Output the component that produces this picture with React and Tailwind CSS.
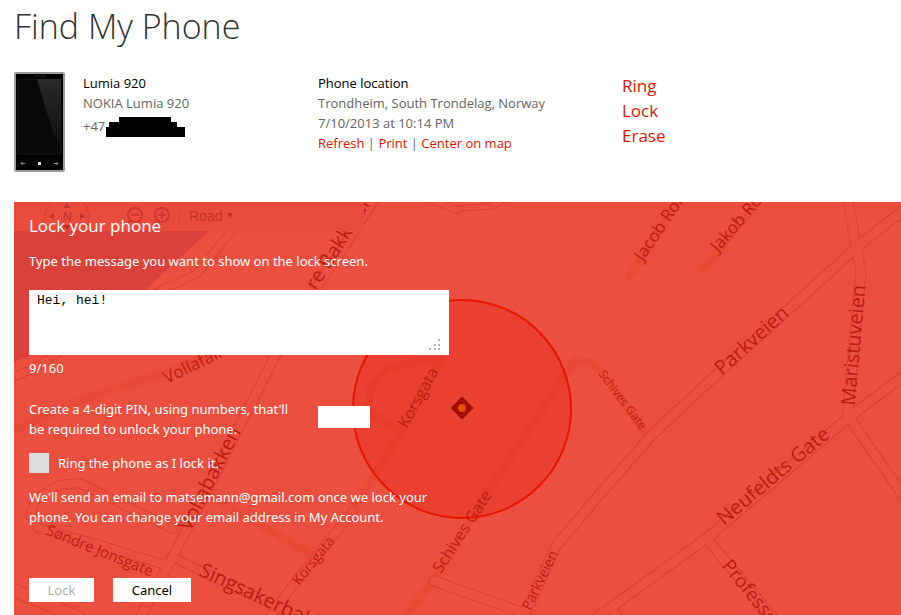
import React, { useState } from "react";

const MAX_LENGTH = 160;

const streets = [
  { d: "M10 379 L30 370 L160 291 L198 273 L231 231 L250 206", w: 9 },
  { d: "M380 190 L345 245 L308 300 L274 358 L252 402 L170 562 L138 622", w: 11 },
  { d: "M168 566 L100 545 L38 528 L30 515 L36 499 L60 485 L79 483 L173 529", w: 10 },
  { d: "M175 558 L205 573 L310 622", w: 10 },
  { d: "M8 588 L80 618", w: 14 },
  { d: "M353 511 L295 583 L264 624", w: 10 },
  { d: "M434 581 L524 613", w: 11 },
  { d: "M906 208 L857 247 L689 400 L651 436 L600 494 L556 546 L520 625", w: 11 },
  { d: "M847 196 L856 245 L861 272 L847 417", w: 11 },
  { d: "M906 374 L848 418 L707 538 L595 619", w: 11 },
  { d: "M707 539 L780 626", w: 11 },
  { d: "M850 419 L898 488 L910 505", w: 11 },
  { d: "M611 607 L622 622", w: 9 },
];

const lanes = [
  "M8 434 L70 404 L167 372 L235 345",
  "M441 360 L423 360 L387 369 L371 387 L368 412 L402 430",
  "M441 360 L402 430 L355 508",
  "M645 432 L600 370 L591 362 L575 360 L547 402 L487 493 L434 580 L400 622",
  "M630 276 L684 192",
  "M703 270 L765 192",
  "M212 497 L300 548 L316 557",
];

const labels = [
  { text: "re Bakkelandet", x: 316, y: 291, angle: -58, size: 20 },
  { text: "Jacob Rolls", x: 643, y: 262, angle: -56, size: 17 },
  { text: "Jakob Rolls", x: 718, y: 253, angle: -49, size: 17 },
  { text: "Parkveien", x: 722, y: 376, angle: -42, size: 20 },
  { text: "Maristuveien", x: 855, y: 406, angle: -85, size: 20 },
  { text: "Neufeldts Gate", x: 724, y: 526, angle: -40, size: 20 },
  { text: "Professor", x: 721, y: 566, angle: 51, size: 19 },
  { text: "Schives Gate", x: 598, y: 374, angle: 53, size: 12 },
  { text: "Schives Gate", x: 441, y: 574, angle: -57, size: 16 },
  { text: "Korsgata", x: 407, y: 429, angle: -61, size: 16 },
  { text: "Korsgata", x: 299, y: 586, angle: -51, size: 14 },
  { text: "Parkveien", x: 530, y: 611, angle: -64, size: 14 },
  { text: "Vollabakken", x: 190, y: 532, angle: -63, size: 20 },
  { text: "Vollafallet", x: 167, y: 384, angle: -26, size: 17 },
  { text: "Søndre Jonsgate", x: 45, y: 534, angle: 22, size: 15 },
  { text: "Singsakerbakken", x: 198, y: 575, angle: 25, size: 20 },
];

const PhoneMap = () => (
  <svg
    className="absolute inset-0 w-full h-full"
    viewBox="14 202 887 413"
    preserveAspectRatio="xMinYMin slice"
    aria-hidden="true"
  >
    <rect x="14" y="202" width="887" height="413" fill="#eb4f3f" />
    <path d="M14 202 H242 L209 231 L145 290 L85 338 L30 356 L14 362 Z" fill="#da413b" />

    <g fill="none" strokeLinecap="round" strokeLinejoin="round">
      {lanes.map((d) => (
        <path key={d} d={d} stroke="#e94937" strokeWidth="8" />
      ))}
      {streets.map(({ d, w }) => (
        <path key={d} d={d} stroke="#dc4034" strokeWidth={w} />
      ))}
      {streets.map(({ d, w }) => (
        <path key={d} d={d} stroke="#eb4f3f" strokeWidth={w - 2} />
      ))}
      <path
        d="M428 202 L452 212 Q458 215 461 211 L495 209 L505 202 M445 202 L460 206 Q463 208 461 211 M461 206 L493 203"
        stroke="#dc4034"
      />
    </g>

    {/* accuracy circle */}
    <circle cx="462" cy="409" r="109" fill="#e91f12" fillOpacity="0.3" stroke="#e81500" strokeWidth="2" />

    <g fill="#bd1c12" fontFamily="'Open Sans', 'Noto Sans', sans-serif">
      {labels.map(({ text, x, y, angle, size }) => (
        <text key={`${text}-${x}`} fontSize={size} transform={`translate(${x} ${y}) rotate(${angle})`}>
          {text}
        </text>
      ))}
    </g>

    {/* phone marker */}
    <path d="M462 396 L474 408 L462 420 L450 408 Z" fill="#a50d04" stroke="#d9453a" strokeWidth="1" />
    <circle cx="462" cy="408" r="4" fill="#e84a00" />

    {/* map toolbar */}
    <rect x="14" y="202" width="350" height="29" fill="#e94c3c" />
    <g fill="none" stroke="#cc382e">
      <circle cx="67" cy="217" r="22" strokeWidth="1" stroke="#d53f34" />
      <circle cx="135" cy="215" r="7" strokeWidth="2" />
      <path d="M131 215 H139 M130 221 L126 225" strokeWidth="2" />
      <circle cx="162" cy="215" r="7" strokeWidth="2" />
      <path d="M158 215 H166 M162 211 V219 M157 221 L153 225" strokeWidth="2" />
      <path d="M179 210 V223" stroke="#d9433a" />
    </g>
    <g fill="#c4322a" fontFamily="'Liberation Sans', Arial, sans-serif">
      <path d="M63 208 H71 L67 203 Z M63 225 H71 L67 230 Z M54 213 V220 L49 216 Z M80 213 V220 L85 216 Z" />
      <text x="63" y="221" fontSize="12">N</text>
      <text x="189" y="221" fontSize="14">Road</text>
      <path d="M227 213 H233 L230 218 Z" />
    </g>
  </svg>
);

const PhonePicture = () => (
  <svg className="shrink-0" width="51" height="100" viewBox="0 0 51 100" role="img" aria-label="Lumia 920">
    <defs>
      <linearGradient id="glare" x1="0" y1="0" x2="0" y2="1">
        <stop offset="0" stopColor="#2a2a2a" />
        <stop offset="1" stopColor="#0c0d0d" />
      </linearGradient>
    </defs>
    <rect x="1" y="1" width="49" height="98" rx="1" fill="#000" stroke="#9a9a9a" strokeWidth="2" />
    <path d="M19 4 H32" stroke="#222" />
    <rect x="4" y="7" width="43" height="75" fill="#070909" stroke="#151515" />
    <path d="M23 7 H47 V76 Q41 68 37 54 Z" fill="url(#glare)" />
    <path d="M7 91.500 H11 M8.500 90 L7 91.500 L8.500 93" fill="none" stroke="#888" />
    <path d="M40 91.500 H44 M42.500 90 L44 91.500 L42.500 93" fill="none" stroke="#888" />
    <rect x="24" y="90" width="3" height="3" fill="#ddd" />
  </svg>
);

const ActionLink = ({ children }) => (
  <a href="#" className="text-[#e51400] hover:underline">
    {children}
  </a>
);

const PhoneSummary = () => (
  <div className="grid grid-cols-[304px_304px_1fr] mt-6">
    <div className="flex gap-[18px]">
      <PhonePicture />
      <div className="pt-px">
        <h2 className="text-black">Lumia 920</h2>
        <p>NOKIA Lumia 920</p>
        <div className="flex gap-px pt-1">
          <span className="leading-[18px]">+47</span>
          <svg width="79" height="20" viewBox="0 0 79 20" aria-hidden="true">
            <path d="M13 0 H65 V5 H71 V10 H79 V20 H0 V10 H3 V5 H13 Z" />
          </svg>
        </div>
      </div>
    </div>
    <div className="pt-px">
      <h2 className="text-black">Phone location</h2>
      <p>Trondheim, South Trondelag, Norway</p>
      <p>7/10/2013 at 10:14 PM</p>
      <p>
        <ActionLink>Refresh</ActionLink> | <ActionLink>Print</ActionLink> |{" "}
        <ActionLink>Center on map</ActionLink>
      </p>
    </div>
    <ul className="pt-px text-[17px] leading-[25px]">
      <li><ActionLink>Ring</ActionLink></li>
      <li><ActionLink>Lock</ActionLink></li>
      <li><ActionLink>Erase</ActionLink></li>
    </ul>
  </div>
);

const LockForm = () => {
  const [message, setMessage] = useState("Hei, hei!");
  const [pin, setPin] = useState("");
  const [ring, setRing] = useState(false);

  return (
    <form
      className="relative px-[15px] pt-3 pb-[13px] text-white font-['Noto_Sans','Open_Sans',sans-serif]"
      onSubmit={(e) => e.preventDefault()}
    >
      <h2 className="font-['Open_Sans','Noto_Sans',sans-serif] text-[17px] leading-6">Lock your phone</h2>
      <label htmlFor="message" className="block mt-[13px]">
        Type the message you want to show on the lock screen.
      </label>
      <div className="relative mt-[19px] w-[420px] max-w-full">
        <textarea
          id="message"
          maxLength={MAX_LENGTH}
          value={message}
          onChange={(e) => setMessage(e.target.value)}
          className="block w-full h-[65px] resize-none bg-white px-2 py-[3px] font-['Liberation_Mono',monospace] text-[13px] leading-4 text-black outline-none"
        />
        <svg className="absolute right-2 bottom-1 pointer-events-none" width="12" height="12" aria-hidden="true">
          <path
            d="M9 0h2v2h-2z M5 5h2v2h-2z M9 5h2v2h-2z M0 9h2v2h-2z M5 9h2v2h-2z M9 9h2v2h-2z"
            fill="#b5b5b5"
          />
        </svg>
      </div>
      <p className="mt-[3px]">
        {message.length}/{MAX_LENGTH}
      </p>

      <div className="flex items-start mt-[21px]">
        <label htmlFor="pin" className="w-[289px] pr-5">
          Create a 4-digit PIN, using numbers, that'll be required to unlock your phone.
        </label>
        <input
          id="pin"
          type="text"
          inputMode="numeric"
          maxLength={4}
          value={pin}
          onChange={(e) => setPin(e.target.value)}
          className="mt-[7px] h-[22px] w-[52px] bg-white px-1 text-black outline-none"
        />
      </div>

      <div className="flex items-center gap-[9px] mt-[14px]">
        <input
          id="ring"
          type="checkbox"
          checked={ring}
          onChange={(e) => setRing(e.target.checked)}
          className="size-5 appearance-none bg-[#ddd] checked:bg-[#555]"
        />
        <label htmlFor="ring">Ring the phone as I lock it.</label>
      </div>

      <p className="mt-[14px] w-[420px] max-w-full">
        We'll send an email to matsemann@gmail.com once we lock your phone. You can change your email
        address in My Account.
      </p>

      <div className="flex gap-[19px] mt-[51px]">
        <button
          type="submit"
          disabled={!pin}
          className="h-6 w-[65px] bg-white text-black disabled:text-[#b0b0b0]"
        >
          Lock
        </button>
        <button type="button" className="h-6 w-[78px] bg-white text-black">
          Cancel
        </button>
      </div>
    </form>
  );
};

const App = () => (
  <main className="bg-white pl-[14px] font-['Open_Sans','Noto_Sans',sans-serif] text-[13px] leading-5 text-[#666]">
    <h1 className="pt-1 text-[34px] leading-11 font-light text-[#333]">Find My Phone</h1>
    <PhoneSummary />
    <section className="relative mt-[30px] overflow-hidden">
      <PhoneMap />
      <LockForm />
    </section>
  </main>
);

export default App;
